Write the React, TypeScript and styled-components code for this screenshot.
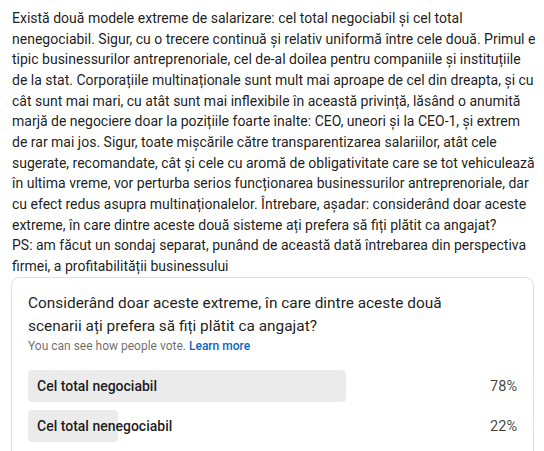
import React, { FC } from "react";
import styled, { createGlobalStyle } from "styled-components";

const GlobalStyle = createGlobalStyle`
  * {
    box-sizing: border-box;
  }
  body {
    margin: 0;
    background: #ffffff;
    font-family: Roboto, "Open Sans", "Liberation Sans", sans-serif;
    -webkit-font-smoothing: antialiased;
  }
`;

// lines kept as in the original post so the wrapping matches
const POST_LINES = [
  "Există două modele extreme de salarizare: cel total negociabil și cel total",
  "nenegociabil. Sigur, cu o trecere continuă și relativ uniformă între cele două. Primul e",
  "tipic businessurilor antreprenoriale, cel de-al doilea pentru companiile și instituțiile",
  "de la stat. Corporațiile multinaționale sunt mult mai aproape de cel din dreapta, și cu",
  "cât sunt mai mari, cu atât sunt mai inflexibile în această privință, lăsând o anumită",
  "marjă de negociere doar la pozițiile foarte înalte: CEO, uneori și la CEO-1, și extrem",
  "de rar mai jos. Sigur, toate mișcările către transparentizarea salariilor, atât cele",
  "sugerate, recomandate, cât și cele cu aromă de obligativitate care se tot vehiculează",
  "în ultima vreme, vor perturba serios funcționarea businessurilor antreprenoriale, dar",
  "cu efect redus asupra multinaționalelor. Întrebare, așadar: considerând doar aceste",
  "extreme, în care dintre aceste două sisteme ați prefera să fiți plătit ca angajat?",
  "PS: am făcut un sondaj separat, punând de această dată întrebarea din perspectiva",
  "firmei, a profitabilității businessului",
];

type PollOption = {
  label: string;
  percent: number;
};

const OPTIONS: PollOption[] = [
  { label: "Cel total negociabil", percent: 78 },
  { label: "Cel total nenegociabil", percent: 22 },
];

const OptionRow: FC<PollOption> = ({ label, percent }) => (
  <Row>
    <Track>
      <Fill style={{ width: `${percent}%` }} />
      <OptionLabel>{label}</OptionLabel>
    </Track>
    <Percent>{percent}%</Percent>
  </Row>
);

export default function App() {
  return (
    <>
      <GlobalStyle />
      <Root>
        <PostText>
          {POST_LINES.map((line) => (
            <Line key={line}>{line}</Line>
          ))}
        </PostText>
        <PollCard>
          <Question>
            <Line>Considerând doar aceste extreme, în care dintre aceste două</Line>
            <Line>scenarii ați prefera să fiți plătit ca angajat?</Line>
          </Question>
          <Caption>
            You can see how people vote. <LearnMore>Learn more</LearnMore>
          </Caption>
          <Options>
            {OPTIONS.map((option) => (
              <OptionRow key={option.label} {...option} />
            ))}
          </Options>
        </PollCard>
      </Root>
    </>
  );
}

const Root = styled.div`
  width: 544px;
  height: 451px;
  overflow: hidden;
  padding-top: 8px;
`;

const PostText = styled.div`
  padding: 0 10px 0 12px;
  color: rgba(0, 0, 0, 0.9);
  font-size: 14px;
  line-height: 20.67px;
`;

const Line = styled.span`
  display: block;
  white-space: nowrap;
`;

const PollCard = styled.div`
  margin: 0 10px 0 11px;
  padding: 14px 16px 16px;
  border: 1px solid #e0dfdc;
  border-radius: 8px;
`;

const Question = styled.h3`
  margin: 0;
  font-size: 15.4px;
  font-weight: 400;
  line-height: 23px;
  color: rgba(0, 0, 0, 0.9);
`;

const Caption = styled.div`
  margin-top: 0;
  font-size: 12px;
  line-height: 17px;
  color: rgba(0, 0, 0, 0.6);
`;

const LearnMore = styled.span`
  color: #0a66c2;
  font-weight: 500;
`;

const Options = styled.div`
  margin-top: 15.5px;
  display: flex;
  flex-direction: column;
  row-gap: 8px;
`;

const Row = styled.div`
  display: flex;
  align-items: center;
`;

const Track = styled.div`
  position: relative;
  width: 408px;
  height: 32px;
  display: flex;
  align-items: center;
`;

const Fill = styled.div`
  position: absolute;
  left: 0;
  top: 0;
  bottom: 0;
  background: #ebebeb;
  border-radius: 4px;
`;

const OptionLabel = styled.span`
  position: relative;
  padding-left: 9px;
  font-size: 14px;
  font-weight: 500;
  color: rgba(0, 0, 0, 0.9);
`;

const Percent = styled.span`
  flex: 1;
  text-align: right;
  font-size: 14.5px;
  color: rgba(0, 0, 0, 0.75);
`;
